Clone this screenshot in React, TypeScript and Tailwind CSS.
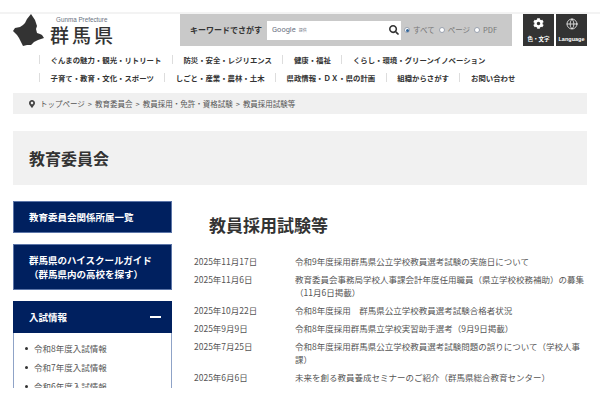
import React from 'react';
import { FaCog, FaMapMarkerAlt, FaSearch } from 'react-icons/fa';
import { Globe } from 'lucide-react';

// --- Page Data ---
const navRows = [
  ['ぐんまの魅力・観光・リトリート', '防災・安全・レジリエンス', '健康・福祉', 'くらし・環境・グリーンイノベーション'],
  ['子育て・教育・文化・スポーツ', 'しごと・産業・農林・土木', '県政情報・ＤＸ・県の計画', '組織からさがす', 'お問い合わせ'],
];

const crumbs = ['トップページ', '教育委員会', '教員採用・免許・資格試験', '教員採用試験等'];

const news = [
  { date: '2025年11月17日', title: '令和9年度採用群馬県公立学校教員選考試験の実施日について' },
  { date: '2025年11月6日', title: '教育委員会事務局学校人事課会計年度任用職員（県立学校校務補助）の募集（11月6日掲載）' },
  { date: '2025年10月22日', title: '令和8年度採用　群馬県公立学校教員選考試験合格者状況' },
  { date: '2025年9月9日', title: '令和8年度採用群馬県立学校実習助手選考（9月9日掲載）' },
  { date: '2025年7月25日', title: '令和8年度採用群馬県公立学校教員選考試験問題の誤りについて（学校人事課）' },
  { date: '2025年6月6日', title: '未来を創る教員養成セミナーのご紹介（群馬県総合教育センター）' },
];

const examLinks = ['令和8年度入試情報', '令和7年度入試情報', '令和6年度入試情報'];

// --- Header Parts ---
const Logo: React.FC = () => (
  <div className="flex w-[180px] shrink-0 pl-[13px]">
    <svg width="31" height="33" viewBox="0 0 31 33" className="shrink-0">
      <path
        d="M18 0l2 3 2 3 1 3 1 3-1 3 1 4 3 1 2 1 2 3-3 1-3 1-4 2-3 3-4 0-4 1-2-4-2-4-2-3-4-4 2-3 5-1 3-2 2-2 2-4z"
        fill="#333333"
      />
    </svg>
    <div className="ml-[6px] flex flex-col">
      <span className="mt-[1px] pl-[6px] text-[6.3px] leading-[9px] text-gray-500 font-['Liberation_Sans',sans-serif]">
        Gunma Prefecture
      </span>
      <span className="text-[19px] font-medium leading-[22px] tracking-[3px] text-[#333333]">群馬県</span>
    </div>
  </div>
);

const Radio: React.FC<{ label: string; checked?: boolean }> = ({ label, checked }) => (
  <span className="flex items-center gap-[3px]">
    <span className="flex h-[6px] w-[6px] items-center justify-center rounded-full border border-gray-400 bg-white">
      {checked && <span className="h-[3px] w-[3px] rounded-full bg-[#336699]" />}
    </span>
    <span>{label}</span>
  </span>
);

const SearchBar: React.FC = () => (
  <div className="flex h-[32px] w-[332px] shrink-0 items-center bg-[#c9c9c9] pl-[10px]">
    <span className="w-[77px] shrink-0 text-[8px] font-bold text-[#333333]">キーワードでさがす</span>
    <div className="flex h-[19px] w-[134px] shrink-0 items-center bg-white pl-[5px] pr-[2px]">
      <span className="text-[7.5px] text-gray-500 font-['Roboto',sans-serif]">Google</span>
      <span className="ml-[3px] text-[4px] text-gray-500">提供</span>
      <FaSearch className="ml-auto text-[10px] text-[#333333]" />
    </div>
    <div className="ml-[3px] flex gap-[4px] text-[7.5px] text-[#777777]">
      <Radio label="すべて" checked />
      <Radio label="ページ" />
      <Radio label="PDF" />
    </div>
  </div>
);

const ToolButton: React.FC<{ icon: React.ReactNode; label: string }> = ({ icon, label }) => (
  <div className="flex h-[32px] w-[31px] flex-col items-center bg-[#333333] pt-[4px] text-white">
    {icon}
    <span className="mt-auto pb-[3px] text-[5.5px] font-bold leading-[7px] font-['Liberation_Sans','Noto_Sans_CJK_JP',sans-serif]">
      {label}
    </span>
  </div>
);

// --- Sidebar ---
const SideLink: React.FC<{ children: React.ReactNode }> = ({ children }) => (
  <div className="border border-[#5c75a8] bg-[#00205f] px-[15px] py-[8px] text-[9.5px] font-bold leading-[14px] text-white">
    {children}
  </div>
);

const Sidebar: React.FC = () => (
  <aside className="flex w-[159px] shrink-0 flex-col gap-[11px] pt-[16px]">
    <SideLink>教育委員会関係所属一覧</SideLink>
    <SideLink>
      群馬県のハイスクールガイド
      <br />
      （群馬県内の高校を探す）
    </SideLink>
    <div className="border border-t-0 border-[#8fa3c7]">
      <div className="-mx-px flex h-[32px] items-center justify-between bg-[#00205f] pl-[16px] pr-[11px] text-[9.5px] font-bold text-white">
        <span>入試情報</span>
        <span className="h-[1.5px] w-[11px] bg-white" />
      </div>
      <ul className="pt-[6px]">
        {examLinks.map((link) => (
          <li key={link} className="flex h-[19px] items-center pl-[11px] text-[8.5px] text-[#555555]">
            <span className="mr-[6px] h-[3px] w-[3px] rounded-full bg-[#333333]" />
            {link}
          </li>
        ))}
      </ul>
    </div>
  </aside>
);

// --- Main ---
export default function App() {
  return (
    <div className="h-[400px] w-[600px] overflow-hidden bg-white font-['Noto_Sans_CJK_JP',sans-serif]">
      <div className="h-[388px] overflow-hidden">
        <div className="mt-[12px] h-[2px] bg-[#f3f3f3]" />
        <header className="flex">
          <Logo />
          <SearchBar />
          <div className="ml-[11px] flex gap-[2px]">
            <ToolButton icon={<FaCog className="text-[11px]" />} label="色・文字" />
            <ToolButton icon={<Globe size={12} strokeWidth={1.5} />} label="Language" />
          </div>
        </header>

        <nav className="mt-[6px] flex flex-col gap-[5px] pl-[39px] text-[7.4px] font-bold text-[#333333]">
          {navRows.map((row, i) => (
            <div key={i} className="flex h-[13px] items-center">
              {row.map((item) => (
                <a key={item} className="border-l border-[#dddddd] px-[10.5px] leading-[9px]">
                  {item}
                </a>
              ))}
            </div>
          ))}
        </nav>

        <div className="mx-[13px] mt-[9px] flex h-[21px] items-center gap-[3px] bg-[#f0f0f0] pl-[15px] text-[7.5px] text-[#555555]">
          <FaMapMarkerAlt className="mr-[1px] text-[8px] text-[#444444]" />
          {crumbs.map((crumb, i) => (
            <React.Fragment key={crumb}>
              {i > 0 && <span>&gt;</span>}
              <span>{crumb}</span>
            </React.Fragment>
          ))}
        </div>

        <div className="mx-[13px] mt-[17px] flex h-[54px] items-center bg-[#f1f1f1] pl-[16px] text-[16px] font-bold text-[#333333]">
          教育委員会
        </div>

        <div className="flex px-[13px]">
          <Sidebar />
          <main className="min-w-0 flex-1 pl-[22px] pt-[28px]">
            <h1 className="pl-[15px] text-[17px] font-bold leading-[24px] text-[#333333]">教員採用試験等</h1>
            <dl className="mt-[18px] text-[8.5px] leading-[13px] text-[#555555]">
              {news.map((row) => (
                <div key={row.date} className="flex pb-[5px]">
                  <dt className="w-[101px] shrink-0">{row.date}</dt>
                  <dd className="min-w-0 flex-1">{row.title}</dd>
                </div>
              ))}
            </dl>
          </main>
        </div>
      </div>
    </div>
  );
}
